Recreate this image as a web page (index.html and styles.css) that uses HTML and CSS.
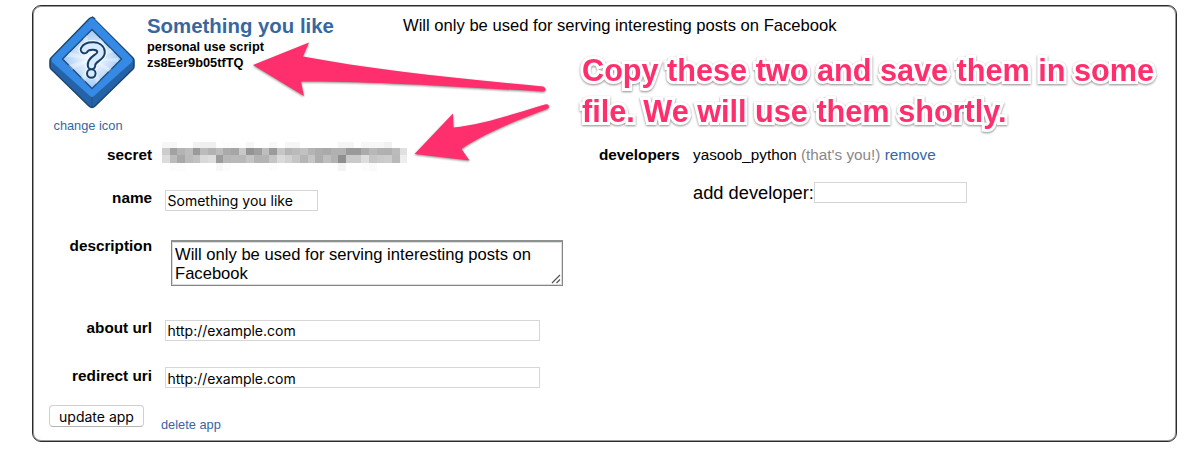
FILE: index.html
```html
<!DOCTYPE html>
<html lang="en">
<head>
<meta charset="utf-8">
<title>Something you like</title>
<link rel="stylesheet" href="styles.css">
</head>
<body>
<main class="app-card">
  <header class="app-header">
    <div class="app-icon">
      <svg class="icon" width="88" height="94" viewBox="0 0 88 94">
        <defs>
          <radialGradient id="glow"><stop offset="0" stop-color="#fff"/><stop offset=".5" stop-color="#d3e6fc"/><stop offset="1" stop-color="#9fc9f6"/></radialGradient>
        </defs>
        <path d="M44 2 85 43Q86 44 86 46V51Q86 53 85 54L47 91Q44 94 41 91L3 54Q2 53 2 51V46Q2 44 3 43L41 4Q44 1 47 4Z" fill="#2563a8" stroke="#1c4772" stroke-width="1.6"/>
        <path d="M44 3Q45 3 46 4L84 43Q85 45 84 47L46 81Q44 83 42 81L4 47Q3 45 4 43L42 4Z" fill="#348ae5"/>
        <path d="M44 82V92" stroke="#1d528e" stroke-width="1"/>
        <path d="M44 14.500 73.500 44 44 73.500 14.500 44Z" fill="url(#glow)" stroke="#214f80" stroke-width="1.500"/>
        <path d="M44 44 35 24 39 20ZM44 44 52 23 56 27ZM44 44 62 33 66 37ZM44 44 70 43 70 47ZM44 44 64 54 61 57ZM44 44 52 65 48 69ZM44 44 37 67 33 63ZM44 44 24 55 20 50ZM44 44 18 42 22 37Z" fill="#fff" opacity=".35"/>
        <g fill="none" stroke-linecap="round" stroke-linejoin="round">
          <path d="M36.500 34.500C39 30 52 29 53 36.500C54 43 43 43 43.500 51M43.300 58.500V58.600" stroke="#eff8ff" stroke-width="12"/>
          <path d="M36.500 34.500C39 30 52 29 53 36.500C54 43 43 43 43.500 50.500" stroke="#173f66" stroke-width="9.500"/>
          <path d="M43.300 58.500V58.600" stroke="#173f66" stroke-width="10.500"/>
          <path d="M36.500 34.500C39 30 52 29 53 36.500C54 43 43 43 43.500 50.500" stroke="#d7eaff" stroke-width="5.500"/>
          <path d="M43.300 58.500V58.600" stroke="#d7eaff" stroke-width="6.500"/>
        </g>
      </svg>
      <a class="link small">change icon</a>
    </div>
    <div class="app-details">
      <h2 class="app-name">Something you like</h2>
      <div class="app-type">personal use script</div>
      <div class="app-type">zs8Eer9b05tfTQ</div>
    </div>
    <div class="app-description">Will only be used for serving interesting posts on Facebook</div>
  </header>

  <div class="columns">
    <form class="edit-form">
      <div class="row row-secret">
        <label class="label">secret</label>
        <svg class="secret" width="246" height="29" viewBox="0 0 246 29" shape-rendering="crispEdges"></svg>
      </div>
      <div class="row row-name">
        <label class="label">name</label>
        <div class="field field-short">Something you like</div>
      </div>
      <div class="row row-description">
        <label class="label">description</label>
        <div class="textarea">Will only be used for serving interesting posts on Facebook
          <svg class="grip" width="10" height="10" viewBox="0 0 10 10"><path d="M1 9 9 1M5.500 9 9 5.500" stroke="#555" stroke-width="1.200"/></svg>
        </div>
      </div>
      <div class="row row-about">
        <label class="label">about url</label>
        <div class="field field-long">http://example.com</div>
      </div>
      <div class="row row-redirect">
        <label class="label">redirect uri</label>
        <div class="field field-long">http://example.com</div>
      </div>
      <div class="actions">
        <button class="button" type="button">update app</button>
        <a class="link small delete">delete app</a>
      </div>
    </form>

    <section class="developers">
      <div class="label dev-label">developers</div>
      <div class="dev-list">
        <div class="dev">yasoob_python <span class="muted">(that's you!)</span> <a class="link">remove</a></div>
        <div class="dev-add">add developer:<div class="field field-short"></div></div>
      </div>
    </section>
  </div>

  <svg class="arrows" width="320" height="150" viewBox="0 0 320 150">
    <g fill="#ff2f6d">
      <path d="M13 35 69 12.500 63 26.500C130 39 210 48 303 56.500Q306 57.500 305.500 60Q305 62 302 61.500C220 57 130 51 61 51.500L64 66Z"/>
      <path d="M174.500 124 213 83.500 213.500 97.500C240 95 274 84 305 74.500Q309 73.500 309 77Q309 78 307 79C278 90 244 103 221.500 119L229.500 130.500Z"/>
    </g>
  </svg>
  <div class="note">Copy these two and save them in some<br>file. We will use them shortly.</div>
</main>
<script src="secret.js"></script>
</body>
</html>
```
FILE: styles.css
```css
* { box-sizing: border-box; }
body {
  margin: 0;
  padding: 5px 23px 0 32px;
  background: #fff;
  color: #000;
  font-family: "Liberation Sans", Arial, sans-serif;
}
.app-card {
  position: relative;
  height: 437px;
  border: 1px solid #2b2b2b;
  border-radius: 9px;
  box-shadow: inset 0 0 0 1px rgba(0, 0, 0, .4);
}
.app-header { display: flex; height: 129px; }
.app-icon {
  display: flex;
  flex-direction: column;
  align-items: center;
  width: 88px;
  margin-left: 15px;
  padding-top: 9px;
}
.app-icon .small { margin: 9px 8px 0 0; line-height: 16px; }
.link { color: #38659f; }
.small { font-size: 12.8px; }
.app-details { width: 267px; padding: 8px 0 0 11px; }
.app-name {
  margin: 0 0 1px;
  color: #38679f;
  font-size: 20.4px;
  line-height: 24px;
  white-space: nowrap;
}
.app-type { font-size: 12.75px; font-weight: bold; line-height: 15.5px; }
.app-description { padding-top: 10px; font-size: 16.6px; line-height: 20px; }

.columns { display: flex; }
.edit-form { width: 566px; }
.row { display: flex; align-items: flex-start; }
.label {
  width: 119px;
  font-size: 15.3px;
  font-weight: bold;
  line-height: 20px;
  text-align: right;
}
.row-secret { height: 55px; padding-top: 10px; }
.row-name { height: 51px; }
.row-description { height: 79px; }
.row-about { height: 47px; }
.row-redirect { height: 38px; }
.secret { margin: -3px 0 0 10px; }
.row-name .label, .row-about .label { margin-top: -2px; }
.row-redirect .label { margin-top: -1px; }
.row-description .label { margin-top: -5px; }
.field {
  height: 21px;
  padding: 1px 2px 0;
  border: 1px solid #d6d6d6;
  font: 14px/18px Inter, sans-serif;
  white-space: nowrap;
}
.row .field { margin-left: 13px; }
.row-redirect .field { padding-top: 2px; }
.field-short { width: 153px; }
.field-long { width: 375px; }
.row-name .field, .row-about .field, .row-redirect .field { padding-left: 1.5px; }
.textarea {
  position: relative;
  width: 392px;
  height: 46px;
  margin: -1px 0 0 19px;
  padding: 3px 3px;
  border: 1px solid #858585;
  border-top: 2px solid #8d9190;
  box-shadow: inset 0 0 0 1px #ddd;
  font-size: 16.6px;
  line-height: 19px;
}
.grip { position: absolute; right: 1px; bottom: 1px; }
.actions { display: flex; align-items: flex-start; padding-left: 16px; }
.button {
  width: 95px;
  height: 22px;
  padding: 1px 0 0;
  border: 1px solid #d0d0d0;
  border-bottom-color: #b5b5b5;
  border-radius: 4px;
  background: #fff;
  color: #000;
  font: 14px/19px Inter, sans-serif;
}
.delete { margin: 12px 0 0 17px; line-height: 16px; }
.developers { display: flex; padding-top: 10px; }
.dev-label { width: 81px; text-align: left; }
.dev-list { margin-left: 13px; }
.dev { font-size: 15.3px; line-height: 20px; white-space: nowrap; }
.muted { color: #888; }
.dev-add { display: flex; margin-top: 17px; font-size: 18.3px; line-height: 21px; }

/* Annotations laid over the form */
.arrows {
  position: absolute;
  left: 207px;
  top: 24px;
  filter: drop-shadow(0 1px 1px rgba(0, 0, 0, .45));
}
.note {
  position: absolute;
  left: 549px;
  top: 44px;
  color: #ff2f6d;
  font-size: 30.65px;
  font-weight: bold;
  line-height: 41px;
  white-space: nowrap;
  -webkit-text-stroke: 6px #fff;
  paint-order: stroke fill;
  filter: drop-shadow(0 1px 1px rgba(0, 0, 0, .45));
}
```
FILE: secret.js
```js
// Pixelated secret: four rows of 32 grey cells, two hex digits each.
const rows = [
  "f7f7fffff2efeffffcfcfff6fffff8fff6f6fffffffffff5f5fff7f7f7f1ffffffff",
  "cca2b4bc9abbb2bcaaa6c8949fbe9bc6b5bbc1b4adaab1b19a9aabb8b1b0bbe0",
  "dcbba8bbc1d8dd9cb7b9b8c4b3b4c5dad1c5b5c5adbeb28fcacaddc5caccb9ed",
  "fffcfcfffffffff7fcfffffffffffcfffffffffffffffff4fffffcfaffffffff"
];
const tops = [0, 6, 13, 21, 29];
const cell = 245.4 / 32;
const svg = document.querySelector(".secret");
rows.forEach((row, r) => {
  for (let c = 0; c < 32; c++) {
    const shade = row.substr(c * 2, 2);
    if (shade === "ff") continue;
    const rect = document.createElementNS("http://www.w3.org/2000/svg", "rect");
    rect.setAttribute("x", c * cell);
    rect.setAttribute("y", tops[r]);
    rect.setAttribute("width", cell);
    rect.setAttribute("height", tops[r + 1] - tops[r]);
    rect.setAttribute("fill", "#" + shade.repeat(3));
    svg.appendChild(rect);
  }
});
```
